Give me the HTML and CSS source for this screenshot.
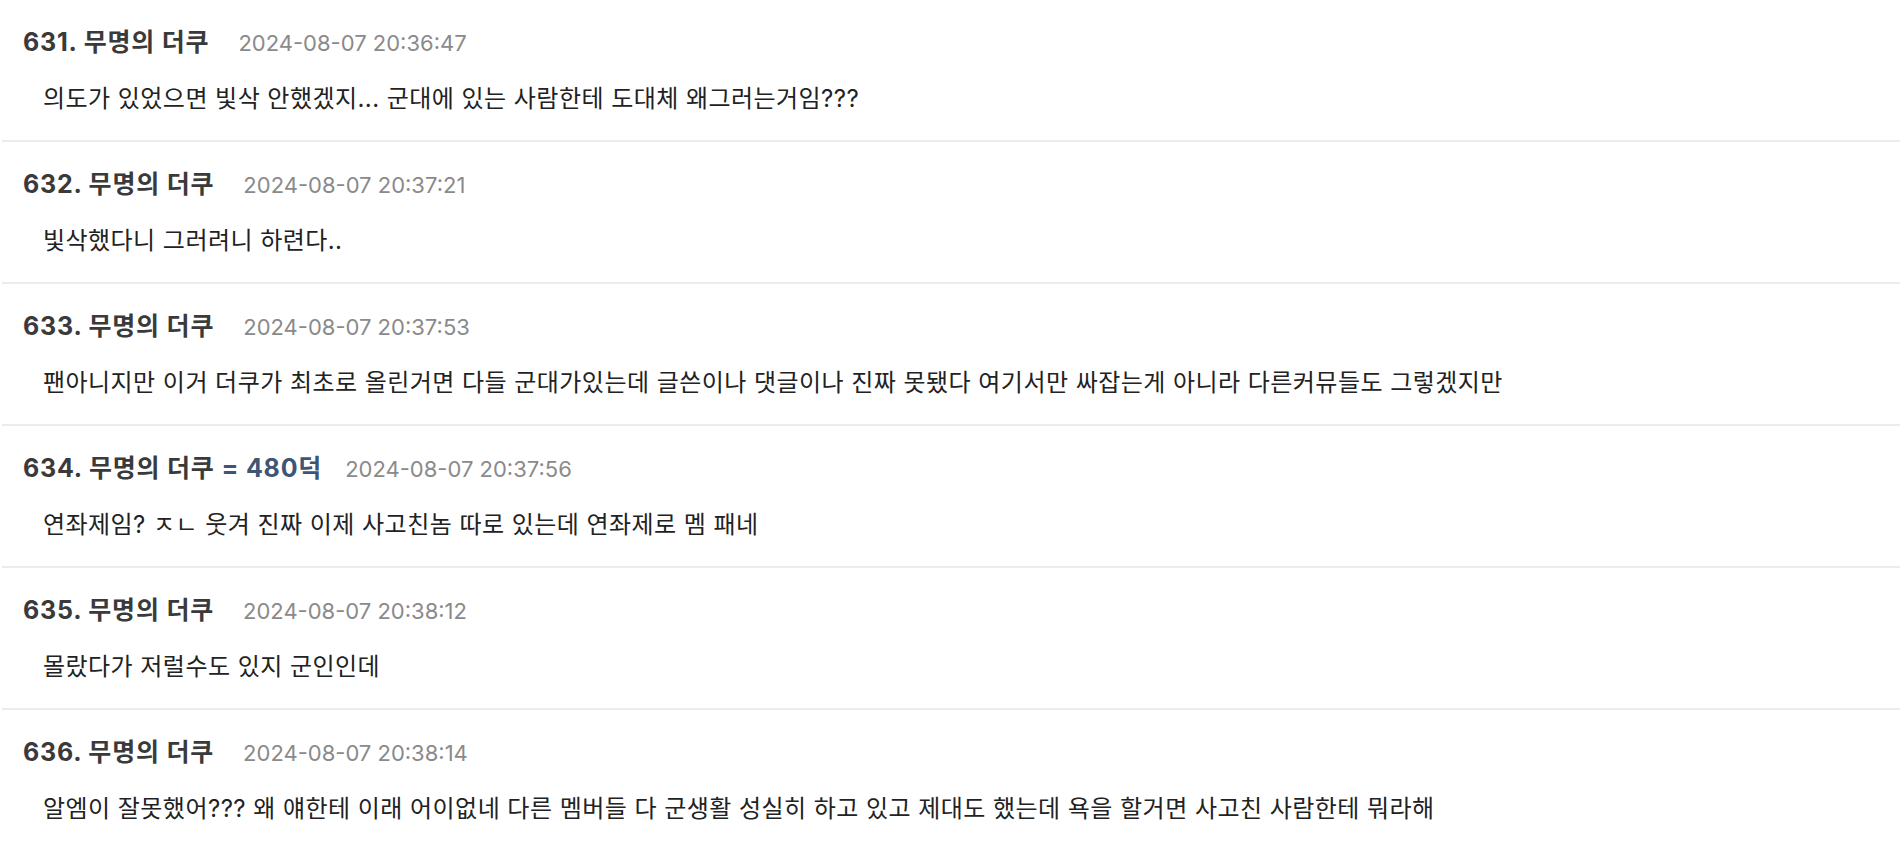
FILE: index.html
```html
<!DOCTYPE html>
<html lang="ko">
<head>
<meta charset="utf-8">
<title>댓글</title>
<link rel="stylesheet" href="styles.css">
</head>
<body>
<div class="comments">
  <div class="comment">
    <div class="meta"><span class="author">631. 무명의 더쿠</span><span class="time">2024-08-07 20:36:47</span></div>
    <div class="text">의도가 있었으면 빛삭 안했겠지... 군대에 있는 사람한테 도대체 왜그러는거임???</div>
  </div>
  <div class="comment">
    <div class="meta"><span class="author">632. 무명의 더쿠</span><span class="time">2024-08-07 20:37:21</span></div>
    <div class="text">빛삭했다니 그러려니 하련다..</div>
  </div>
  <div class="comment">
    <div class="meta"><span class="author">633. 무명의 더쿠</span><span class="time">2024-08-07 20:37:53</span></div>
    <div class="text">팬아니지만 이거 더쿠가 최초로 올린거면 다들 군대가있는데 글쓴이나 댓글이나 진짜 못됐다 여기서만 싸잡는게 아니라 다른커뮤들도 그렇겠지만</div>
  </div>
  <div class="comment">
    <div class="meta"><span class="author">634. 무명의 더쿠 <span class="duck">= 480덕</span></span><span class="time time-near">2024-08-07 20:37:56</span></div>
    <div class="text">연좌제임? ㅈㄴ 웃겨 진짜 이제 사고친놈 따로 있는데 연좌제로 멤 패네</div>
  </div>
  <div class="comment">
    <div class="meta"><span class="author">635. 무명의 더쿠</span><span class="time">2024-08-07 20:38:12</span></div>
    <div class="text">몰랐다가 저럴수도 있지 군인인데</div>
  </div>
  <div class="comment">
    <div class="meta"><span class="author">636. 무명의 더쿠</span><span class="time">2024-08-07 20:38:14</span></div>
    <div class="text">알엠이 잘못했어??? 왜 얘한테 이래 어이없네 다른 멤버들 다 군생활 성실히 하고 있고 제대도 했는데 욕을 할거면 사고친 사람한테 뭐라해</div>
  </div>
</div>
</body>
</html>
```

FILE: styles.css
```css
html, body {
  margin: 0;
  padding: 0;
  background: #ffffff;
}

body {
  font-family: "Inter", "Noto Sans CJK KR", "Noto Sans", sans-serif;
  color: #222;
}

.comments {
  padding-left: 2px;
}

.comment {
  border-bottom: 2px solid #ececec;
  padding-top: 27px;
  height: 113px;
}

.comment:last-child {
  border-bottom: none;
}

.meta {
  display: flex;
  align-items: baseline;
  padding-left: 21px;
  height: 30px;
  line-height: 30px;
  white-space: nowrap;
}

.author {
  flex-shrink: 0;
  font-size: 25px;
  font-weight: 700;
  color: #3a3a3a;
  letter-spacing: 0.8px;
}

.duck {
  color: #3f5575;
}

.time {
  flex-shrink: 0;
  margin-left: 29px;
  font-size: 22px;
  color: #8a8a8a;
}

.time-near {
  margin-left: 23px;
}

.text {
  margin-top: 27px;
  padding-left: 41px;
  font-size: 24px;
  letter-spacing: 0.45px;
  line-height: 30px;
  color: #222;
}
```
